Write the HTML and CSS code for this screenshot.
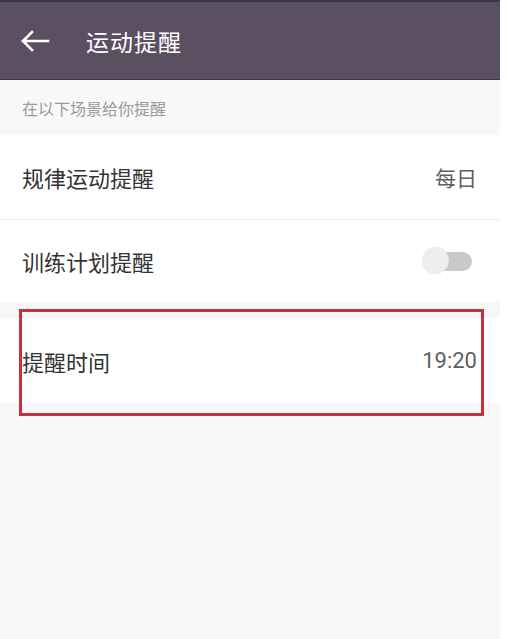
FILE: index.html
```html
<!DOCTYPE html>
<html lang="zh-CN">
<head>
<meta charset="utf-8">
<title>运动提醒</title>
<link rel="stylesheet" href="styles.css">
</head>
<body>
<div class="screen">
  <header class="appbar">
    <svg class="back" width="30" height="22" viewBox="0 0 30 22">
      <path d="M28 11H3M12 2L3 11L12 20" fill="none" stroke="#ffffff" stroke-width="2.6" stroke-linecap="square"/>
    </svg>
    <h1 class="title">运动提醒</h1>
  </header>
  <div class="section-hint">在以下场景给你提醒</div>
  <div class="row row-first">
    <span class="label">规律运动提醒</span>
    <span class="value">每日</span>
  </div>
  <div class="divider"></div>
  <div class="row row-second">
    <span class="label">训练计划提醒</span>
    <span class="switch"><span class="track"></span><span class="knob"></span></span>
  </div>
  <div class="gap"></div>
  <div class="row row-third">
    <span class="label">提醒时间</span>
    <span class="value time">19:20</span>
    <div class="highlight"></div>
  </div>
  <div class="rest"></div>
</div>
</body>
</html>
```

FILE: styles.css
```css
html, body {
  margin: 0;
  padding: 0;
  background: #ffffff;
}
body {
  font-family: "Noto Sans CJK SC", "Noto Sans", sans-serif;
  width: 508px;
  height: 639px;
  overflow: hidden;
}
.screen {
  width: 500px;
  height: 639px;
  background: #f8f8f8;
  display: flex;
  flex-direction: column;
}
.appbar {
  height: 77px;
  background: #5b5061;
  border-top: 2px solid #3f3644;
  border-bottom: 1px solid #3f3844;
  display: flex;
  align-items: center;
  box-sizing: content-box;
}
.back {
  margin-left: 20px;
  margin-top: 0;
}
.title {
  margin: 0 0 0 36px;
  font-size: 23px;
  font-weight: 400;
  color: #ffffff;
  letter-spacing: 1px;
}
.section-hint {
  height: 55px;
  display: flex;
  align-items: center;
  padding-left: 22px;
  font-size: 16px;
  color: #9a9a9a;
  background: #f8f8f8;
}
.row {
  background: #ffffff;
  display: flex;
  align-items: center;
  justify-content: space-between;
  padding: 0 23px 0 22px;
}
.row-first { height: 84px; }
.row-second { height: 82px; }
.row-third { height: 85px; position: relative; }
.label {
  font-size: 22px;
  color: #333333;
}
.value {
  font-size: 21px;
  color: #5f5f5f;
}
.time {
  font-family: "Roboto", "Noto Sans CJK SC", sans-serif;
  font-size: 22px;
}
.divider {
  height: 1px;
  background: #ececec;
}
.gap {
  height: 16px;
  background: #f7f7f7;
}
.switch {
  position: relative;
  width: 50px;
  height: 28px;
  margin-right: 5px;
}
.track {
  position: absolute;
  right: 0;
  top: 5px;
  width: 44px;
  height: 19px;
  border-radius: 10px;
  background: #c9c9c9;
}
.knob {
  position: absolute;
  left: 0;
  top: 0;
  width: 27px;
  height: 27px;
  border-radius: 50%;
  background: #eeeeee;
  box-shadow: 0 0 1px rgba(0,0,0,0.08);
}
.highlight {
  position: absolute;
  left: 19px;
  top: -9px;
  width: 465px;
  height: 107px;
  border: 3px solid #c8313b;
  box-sizing: border-box;
}
.rest {
  flex: 1;
  background: #f8f8f8;
}
```
